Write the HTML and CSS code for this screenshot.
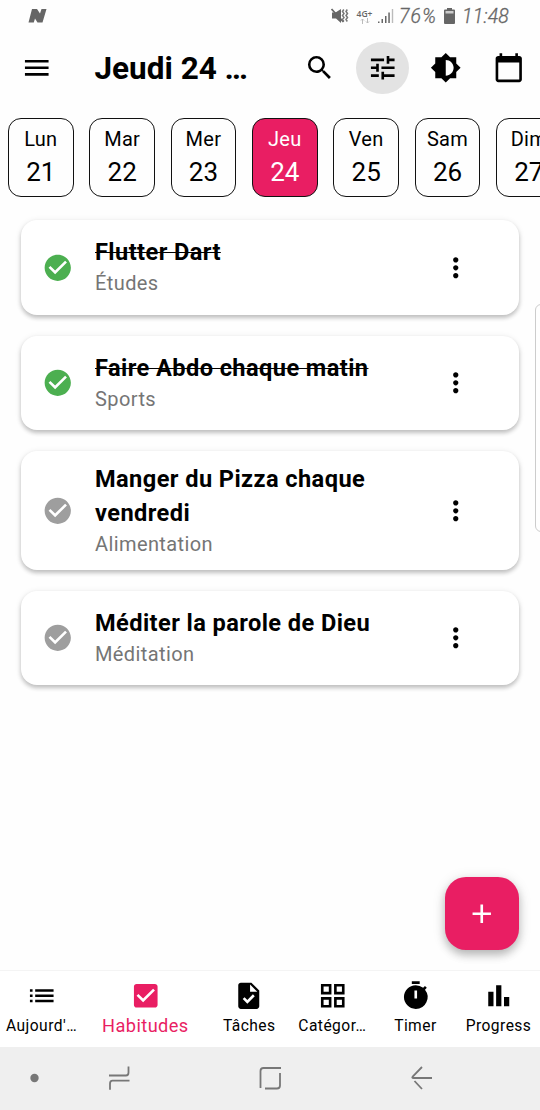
FILE: index.html
```html
<!DOCTYPE html>
<html lang="fr">
<head>
<meta charset="utf-8">
<title>Habitudes</title>
<link rel="stylesheet" href="styles.css">
</head>
<body>
<div class="app">
  <div class="status">
    <svg class="notif" width="20" height="16" viewBox="0 0 20 16"><path d="M4 1h5l3 4.500L13.500 1h5l-4 13.500h-5l-2.500-4-1.200 4H.5z"/></svg>
    <svg class="mute" width="18" height="16" viewBox="0 0 18 16"><path d="M1 4.500h3.500L10 1v14l-5-4.500H1z"/><path d="M.5 1l12 13" fill="none" stroke="#666" stroke-width="1.800"/><path d="M12.800 1.500l-1.300 2 1.500 2-1.500 2 1.500 2-1.500 2 1.300 2M16.300 1.500l-1.300 2 1.500 2-1.500 2 1.500 2-1.500 2 1.300 2" fill="none" stroke="#777" stroke-width="1.500"/></svg>
    <div class="net"><span>4G+</span><svg width="10" height="6" viewBox="0 0 10 6"><path d="M2.500 6V1M1 2.500L2.500 1 4 2.500M7.500 0v5M6 3.500L7.500 5 9 3.500" fill="none" stroke="#bbb"/></svg></div>
    <svg class="signal" width="17" height="16" viewBox="0 0 17 16"><path d="M1 13.500h1.500V15H1zM4.500 11h1.500v4H4.500zM8 8h1.500v7H8zM11.300 4.500h1.500V15h-1.500z"/><path d="M14.800 1h1.400v14h-1.400z" fill="#bbb"/></svg>
    <span class="pct">76%</span>
    <svg class="batt" width="11" height="16" viewBox="0 0 11 16"><path d="M3 0h5v1.500h2A1 1 0 0 1 11 2.500V15a1 1 0 0 1-1 1H1a1 1 0 0 1-1-1V2.500a1 1 0 0 1 1-1h2z"/><path d="M1.500 3h8v2.500h-8z" fill="#ccc"/></svg>
    <span class="clock">11:48</span>
  </div>

  <header class="bar">
    <div class="menu"><svg class="icon" viewBox="0 0 24 24"><path d="M3 18h18v-2H3v2zm0-5h18v-2H3v2zm0-7v2h18V6H3z"/></svg></div>
    <h1 class="title">Jeudi 24 …</h1>
    <div class="action"><svg class="icon" viewBox="0 0 24 24"><path d="M15.500 14h-.79l-.28-.27A6.471 6.471 0 0 0 16 9.500 6.500 6.500 0 1 0 9.500 16c1.610 0 3.090-.59 4.230-1.570l.27.28v.79l5 4.990L20.490 19l-4.990-5zm-6 0C7.010 14 5 11.990 5 9.500S7.010 5 9.500 5 14 7.010 14 9.500 11.990 14 9.500 14z"/></svg></div>
    <div class="action"><span class="pressed"><svg class="icon" viewBox="0 0 24 24"><path d="M3 17v2h6v-2H3zM3 5v2h10V5H3zm10 16v-2h8v-2h-8v-2h-2v6h2zM7 9v2H3v2h4v2h2V9H7zm14 4v-2H11v2h10zm-6-4h2V7h4V5h-4V3h-2v6z"/></svg></span></div>
    <div class="action"><svg class="icon" viewBox="0 0 24 24"><path d="M20 8.690V4h-4.690L12 .69 8.690 4H4v4.690L.69 12 4 15.310V20h4.690L12 23.310 15.310 20H20v-4.690L23.310 12 20 8.690zM12 18V6c3.310 0 6 2.690 6 6s-2.690 6-6 6z"/></svg></div>
    <div class="action"><svg class="icon" viewBox="0 0 24 24"><path d="M20 3h-1V1h-2v2H7V1H5v2H4c-1.100 0-2 .9-2 2v16c0 1.100.9 2 2 2h16c1.100 0 2-.9 2-2V5c0-1.100-.9-2-2-2zm0 18H4V8h16v13z"/></svg></div>
  </header>

  <div class="days">
    <div class="day"><span>Lun</span><b>21</b></div>
    <div class="day"><span>Mar</span><b>22</b></div>
    <div class="day"><span>Mer</span><b>23</b></div>
    <div class="day selected"><span>Jeu</span><b>24</b></div>
    <div class="day"><span>Ven</span><b>25</b></div>
    <div class="day"><span>Sam</span><b>26</b></div>
    <div class="day"><span>Dim</span><b>27</b></div>
  </div>

  <main class="list">
    <article class="card done">
      <svg class="check" viewBox="0 0 24 24"><path d="M12 2C6.480 2 2 6.480 2 12s4.480 10 10 10 10-4.480 10-10S17.520 2 12 2zm-2 15l-5-5 1.410-1.410L10 14.170l7.590-7.590L19 8l-9 9z"/></svg>
      <div class="text"><h2>Flutter Dart</h2><p>Études</p></div>
      <svg class="icon more" viewBox="0 0 24 24"><path d="M12 8c1.100 0 2-.9 2-2s-.9-2-2-2-2 .9-2 2 .9 2 2 2zm0 2c-1.100 0-2 .9-2 2s.9 2 2 2 2-.9 2-2-.9-2-2-2zm0 6c-1.100 0-2 .9-2 2s.9 2 2 2 2-.9 2-2-.9-2-2-2z"/></svg>
    </article>
    <article class="card done">
      <svg class="check" viewBox="0 0 24 24"><path d="M12 2C6.480 2 2 6.480 2 12s4.480 10 10 10 10-4.480 10-10S17.520 2 12 2zm-2 15l-5-5 1.410-1.410L10 14.170l7.590-7.590L19 8l-9 9z"/></svg>
      <div class="text"><h2>Faire Abdo chaque matin</h2><p>Sports</p></div>
      <svg class="icon more" viewBox="0 0 24 24"><path d="M12 8c1.100 0 2-.9 2-2s-.9-2-2-2-2 .9-2 2 .9 2 2 2zm0 2c-1.100 0-2 .9-2 2s.9 2 2 2 2-.9 2-2-.9-2-2-2zm0 6c-1.100 0-2 .9-2 2s.9 2 2 2 2-.9 2-2-.9-2-2-2z"/></svg>
    </article>
    <article class="card tall">
      <svg class="check" viewBox="0 0 24 24"><path d="M12 2C6.480 2 2 6.480 2 12s4.480 10 10 10 10-4.480 10-10S17.520 2 12 2zm-2 15l-5-5 1.410-1.410L10 14.170l7.590-7.590L19 8l-9 9z"/></svg>
      <div class="text"><h2>Manger du Pizza chaque vendredi</h2><p>Alimentation</p></div>
      <svg class="icon more" viewBox="0 0 24 24"><path d="M12 8c1.100 0 2-.9 2-2s-.9-2-2-2-2 .9-2 2 .9 2 2 2zm0 2c-1.100 0-2 .9-2 2s.9 2 2 2 2-.9 2-2-.9-2-2-2zm0 6c-1.100 0-2 .9-2 2s.9 2 2 2 2-.9 2-2-.9-2-2-2z"/></svg>
    </article>
    <article class="card">
      <svg class="check" viewBox="0 0 24 24"><path d="M12 2C6.480 2 2 6.480 2 12s4.480 10 10 10 10-4.480 10-10S17.520 2 12 2zm-2 15l-5-5 1.410-1.410L10 14.170l7.590-7.590L19 8l-9 9z"/></svg>
      <div class="text"><h2>Méditer la parole de Dieu</h2><p>Méditation</p></div>
      <svg class="icon more" viewBox="0 0 24 24"><path d="M12 8c1.100 0 2-.9 2-2s-.9-2-2-2-2 .9-2 2 .9 2 2 2zm0 2c-1.100 0-2 .9-2 2s.9 2 2 2 2-.9 2-2-.9-2-2-2zm0 6c-1.100 0-2 .9-2 2s.9 2 2 2 2-.9 2-2-.9-2-2-2z"/></svg>
    </article>
  </main>

  <nav class="tabs">
    <div class="tab"><svg class="icon" viewBox="0 0 24 24"><path d="M3 13h2v-2H3v2zm0 4h2v-2H3v2zm0-8h2V7H3v2zm4 4h14v-2H7v2zm0 4h14v-2H7v2zM7 7v2h14V7H7z"/></svg><span>Aujourd'…</span></div>
    <div class="tab active"><svg class="icon" viewBox="0 0 24 24"><path d="M19 3H5c-1.110 0-2 .9-2 2v14c0 1.100.89 2 2 2h14c1.110 0 2-.9 2-2V5c0-1.100-.89-2-2-2zm-9 14l-5-5 1.410-1.410L10 14.170l7.590-7.590L19 8l-9 9z"/></svg><span>Habitudes</span></div>
    <div class="tab"><svg class="icon" viewBox="0 0 24 24"><path d="M14 2H6c-1.100 0-2 .9-2 2v16c0 1.100.89 2 1.990 2H18c1.100 0 2-.9 2-2V8l-6-6zm-3.060 16L7.400 14.460l1.410-1.410 2.120 2.120 4.240-4.240 1.410 1.410L10.940 18zM13 9V3.500L18.500 9H13z"/></svg><span>Tâches</span></div>
    <div class="tab"><svg class="icon" viewBox="0 0 24 24"><path fill-rule="evenodd" d="M3 3v8h8V3H3zm6 6H5V5h4v4zm-6 4v8h8v-8H3zm6 6H5v-4h4v4zm4-16v8h8V3h-8zm6 6h-4V5h4v4zm-6 4v8h8v-8h-8zm6 6h-4v-4h4v4z"/></svg><span>Catégor…</span></div>
    <div class="tab"><svg class="icon" viewBox="0 0 24 24"><path fill-rule="evenodd" d="M15 1H9v2h6V1zm4.030 6.390l1.420-1.420c-.43-.51-.9-.99-1.410-1.410l-1.420 1.420A8.962 8.962 0 0 0 12 4c-4.970 0-9 4.030-9 9s4.020 9 9 9a8.994 8.994 0 0 0 7.030-14.610zM13 14h-2V8h2v6z"/></svg><span>Timer</span></div>
    <div class="tab"><svg class="icon" viewBox="0 0 24 24"><path d="M4 9h4v11H4zM10 4h4v16h-4zM16 13h4v7h-4z"/></svg><span>Progress</span></div>
  </nav>

  <footer class="sysnav">
    <svg width="540" height="63" viewBox="0 0 540 63" fill="none" stroke="#777" stroke-width="1.800"><circle cx="34.500" cy="31" r="4.200" fill="#777" stroke="none"/><path d="M109 28.500h17q2.500 0 2.500-3V19.500M129.500 33.700h-17q-2.500 0-2.500 3v6"/><path d="M260.500 41V24q0-3 3-3H281M280 26v12.500q0 3-3 3H265"/><path d="M432 31h-18.500q-2 0-.8-1.500l9.300-9.500M414.500 34l7.500 8"/></svg>
  </footer>

  <div class="edge"></div>
  <div class="fab"><svg class="icon" viewBox="0 0 24 24"><path d="M19 13h-6v6h-2v-6H5v-2h6V5h2v6h6v2z"/></svg></div>
</div>
</body>
</html>
```
FILE: styles.css
```css
* { box-sizing: border-box; margin: 0; padding: 0; }
body { width: 540px; height: 1110px; overflow: hidden; background: #fefefe; font-family: Roboto, sans-serif; color: #000; }
svg { display: block; flex: none; }
.app { position: relative; display: flex; flex-direction: column; width: 540px; height: 1110px; overflow: hidden; }
.icon { width: 31.5px; height: 31.5px; fill: currentColor; }

.status { display: flex; align-items: center; height: 32px; padding-left: 28px; fill: #666; color: #666; }
.mute { margin-left: 283px; }
.net { display: flex; flex-direction: column; align-items: center; width: 17px; margin-left: 7px; font: 600 8.5px/9px "Open Sans", sans-serif; }
.signal { margin-left: 4px; }
.pct, .clock { font-family: Roboto, sans-serif; font-style: italic; font-weight: 300; font-size: 19.5px; white-space: nowrap; -webkit-text-stroke: .3px #666; }
.pct { width: 39px; margin-left: 5px; letter-spacing: 1px; }
.batt { margin-left: 6px; }
.clock { margin-left: 7px; letter-spacing: .2px; }

.bar { display: flex; align-items: center; height: 72px; }
.menu { display: flex; justify-content: center; width: 73.5px; }
.title { flex: 1; padding-left: 21px; font-size: 31.5px; font-weight: 700; white-space: nowrap; }
.action { display: flex; flex: none; align-items: center; justify-content: center; width: 63px; height: 63px; }
.pressed { display: flex; align-items: center; justify-content: center; width: 52.5px; height: 52.5px; border-radius: 50%; background: #e3e3e3; }

.days { display: flex; gap: 15.75px; height: 79px; margin-top: 14px; padding-left: 8px; }
.day { display: flex; flex: none; flex-direction: column; align-items: center; width: 65.6px; height: 79px; padding-top: 8px; border: 1.3px solid #111; border-radius: 13px; }
.day span { font-size: 20px; line-height: 24px; letter-spacing: .3px; }
.day b { margin-top: 5px; font-size: 26px; font-weight: 400; line-height: 32px; }
.selected { background: #e91e63; color: #fff; }

.list { display: flex; flex: 1; flex-direction: column; gap: 21px; padding: 23.3px 21px 0; }
.card { display: flex; align-items: center; height: 94.5px; padding-left: 21px; border-radius: 16px; background: #fff; box-shadow: 0 3px 4px rgba(0,0,0,.2), 0 1px 6px rgba(0,0,0,.1); }
.tall { height: 118.5px; }
.check { width: 31.5px; height: 31.5px; fill: #9e9e9e; }
.done .check { fill: #4caf50; }
.text { width: 330px; margin-left: 21.5px; padding: 0 30px 2px 0; }
.tall .text { padding-bottom: 0; }
.text h2 { font-size: 23.6px; font-weight: 700; line-height: 34px; letter-spacing: .42px; }
.done h2 { text-decoration: line-through; text-decoration-thickness: 1.3px; }
.text p { color: #757575; font-size: 20px; line-height: 29px; letter-spacing: .4px; }
.more { margin-left: 15px; }

.tabs { display: flex; flex: none; height: 77px; border-top: 1px solid #f4f4f4; background: #fff; }
.tab { display: flex; flex: none; flex-direction: column; align-items: center; width: 83.1px; padding-top: 9px; white-space: nowrap; }
.tab span { margin-top: 5px; font-size: 15.6px; line-height: 19px; letter-spacing: .45px; }
.tab.active { width: 124.6px; color: #e91e63; }
.tab.active span { margin-top: 3px; font-size: 18.2px; line-height: 21px; letter-spacing: .42px; }
.sysnav { flex: none; height: 63px; background: #efefef; }

.edge { position: absolute; top: 304px; left: 534.5px; width: 12px; height: 228px; border: 1.3px solid #ccc; border-radius: 7px; }
.fab { position: absolute; top: 876.5px; left: 445.2px; display: flex; align-items: center; justify-content: center; width: 73.5px; height: 73.5px; border-radius: 21px; background: #e91e63; color: #fff; box-shadow: 0 5px 8px rgba(0,0,0,.22), 0 2px 14px rgba(0,0,0,.12); }
```
